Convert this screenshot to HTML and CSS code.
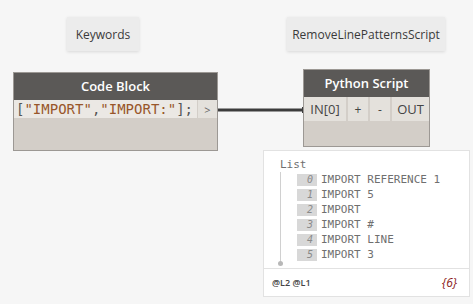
FILE: index.html
```html
<!DOCTYPE html>
<html lang="en">
<head>
  <meta charset="UTF-8" />
  <title>Dynamo graph</title>
  <link rel="stylesheet" href="styles.css">
</head>
<body>
  <div class="canvas">

    <!-- Notes -->
    <div class="note note-keywords">Keywords</div>
    <div class="note note-script">RemoveLinePatternsScript</div>

    <!-- Wire -->
    <svg class="wire" width="90" height="10" viewBox="0 0 90 10">
      <line x1="2" y1="5" x2="88" y2="5" stroke="#3c3c3c" stroke-width="3"/>
      <rect x="0" y="2" width="3" height="6" fill="#3c3c3c"/>
      <rect x="87" y="2" width="3" height="6" fill="#3c3c3c"/>
    </svg>

    <!-- Code Block node -->
    <div class="node node-code">
      <div class="node-title">Code Block</div>
      <div class="code-row">
        <div class="code-text"><span class="punct">[</span><span class="str">"IMPORT"</span><span class="punct">,</span><span class="str">"IMPORT:"</span><span class="punct">];</span></div>
        <div class="port port-out">&gt;</div>
      </div>
      <div class="node-body"></div>
    </div>

    <!-- Python Script node -->
    <div class="node node-python">
      <div class="node-title">Python Script</div>
      <div class="port-row">
        <div class="port port-in">IN[0]</div>
        <div class="port port-btn">+</div>
        <div class="port port-btn">-</div>
        <div class="port port-outp">OUT</div>
      </div>
      <div class="node-body"></div>
    </div>

    <!-- Watch preview -->
    <div class="preview">
      <div class="preview-list">
        <div class="list-label">List</div>
        <div class="list-items">
          <div class="list-item"><span class="idx idx-zero">0</span>IMPORT REFERENCE 1</div>
          <div class="list-item"><span class="idx">1</span>IMPORT 5</div>
          <div class="list-item"><span class="idx">2</span>IMPORT</div>
          <div class="list-item"><span class="idx">3</span>IMPORT #</div>
          <div class="list-item"><span class="idx">4</span>IMPORT LINE</div>
          <div class="list-item"><span class="idx">5</span>IMPORT 3</div>
        </div>
      </div>
      <div class="preview-foot">
        <span class="levels">@L2 @L1</span>
        <span class="count">{6}</span>
      </div>
    </div>

  </div>
</body>
</html>
```

FILE: styles.css
```css
* {
  margin: 0;
  padding: 0;
  box-sizing: border-box;
}

body {
  background-color: #f6f6f6;
  font-family: 'Open Sans', 'Noto Sans', sans-serif;
}

.canvas {
  position: relative;
  width: 473px;
  height: 304px;
  overflow: hidden;
}

/* Notes */
.note {
  position: absolute;
  top: 17px;
  height: 34px;
  background-color: #ececec;
  box-shadow: 0 1px 3px rgba(0, 0, 0, 0.12);
  color: #3a3a3a;
  font-size: 12px;
  display: flex;
  align-items: center;
  justify-content: center;
}

.note-keywords {
  left: 67px;
  width: 72px;
}

.note-script {
  left: 287px;
  width: 158px;
}

/* Wire */
.wire {
  position: absolute;
  left: 215px;
  top: 105px;
}

/* Nodes */
.node {
  position: absolute;
  display: flex;
  flex-direction: column;
  border: 1px solid #9c9894;
  background-color: #d3cec8;
}

.node-title {
  background-color: #5b5957;
  color: #ffffff;
  font-size: 13px;
  font-weight: 600;
  text-align: center;
  height: 27px;
  line-height: 27px;
}

.node-body {
  flex: 1;
}

.node-code {
  left: 13px;
  top: 72px;
  width: 205px;
  height: 79px;
}

.code-row {
  display: flex;
  height: 18px;
}

.code-text {
  flex: 1;
  background-color: #ebe8e4;
  font-family: 'DejaVu Sans Mono', monospace;
  font-size: 14px;
  line-height: 18px;
  padding-left: 2px;
  white-space: nowrap;
  overflow: hidden;
}

.str {
  color: #98562a;
}

.punct {
  color: #555555;
}

.port {
  background-color: #e4e1dc;
  color: #444444;
  display: flex;
  align-items: center;
  justify-content: center;
}

.port-out {
  width: 19px;
  margin-left: 1px;
  font-size: 11px;
  color: #666666;
}

.node-python {
  left: 303px;
  top: 69px;
  width: 127px;
  height: 78px;
}

.port-row {
  display: flex;
  gap: 2px;
  height: 24px;
  background-color: #d3cec8;
}

.port-in {
  width: 42px;
  font-size: 13px;
}

.port-btn {
  width: 20px;
  font-size: 12px;
}

.port-outp {
  flex: 1;
  font-size: 13px;
}

/* Watch preview */
.preview {
  position: absolute;
  left: 263px;
  top: 150px;
  width: 207px;
  height: 147px;
  background-color: #ffffff;
  border: 1px solid #e2e2e2;
  display: flex;
  flex-direction: column;
}

.preview-list {
  flex: 1;
  padding: 6px 0 0 16px;
  font-family: 'DejaVu Sans Mono', monospace;
  font-size: 11px;
  color: #6f6f6f;
}

.list-label {
  height: 15px;
  line-height: 15px;
}

.list-items {
  position: relative;
  padding-left: 17px;
  padding-bottom: 6px;
}

.list-items::before {
  content: '';
  position: absolute;
  left: 0;
  top: 0;
  bottom: 4px;
  border-left: 1px solid #d0d0d0;
}

.list-items::after {
  content: '';
  position: absolute;
  left: -2px;
  bottom: 2px;
  width: 5px;
  height: 5px;
  border-radius: 50%;
  background-color: #b8b8b8;
}

.list-item {
  display: flex;
  align-items: center;
  height: 15px;
  white-space: nowrap;
}

.idx {
  width: 20px;
  height: 12px;
  margin-right: 4px;
  background-color: #d8d8d8;
  color: #8a8a8a;
  font-style: italic;
  font-size: 10px;
  text-align: right;
  padding-right: 4px;
  line-height: 12px;
}

.preview-foot {
  height: 28px;
  border-top: 1px solid #e2e2e2;
  display: flex;
  align-items: center;
  justify-content: space-between;
  padding: 0 12px 0 8px;
}

.levels {
  font-size: 9px;
  font-weight: 600;
  color: #444444;
}

.count {
  font-size: 12px;
  font-style: italic;
  color: #8b1a1a;
}
```
